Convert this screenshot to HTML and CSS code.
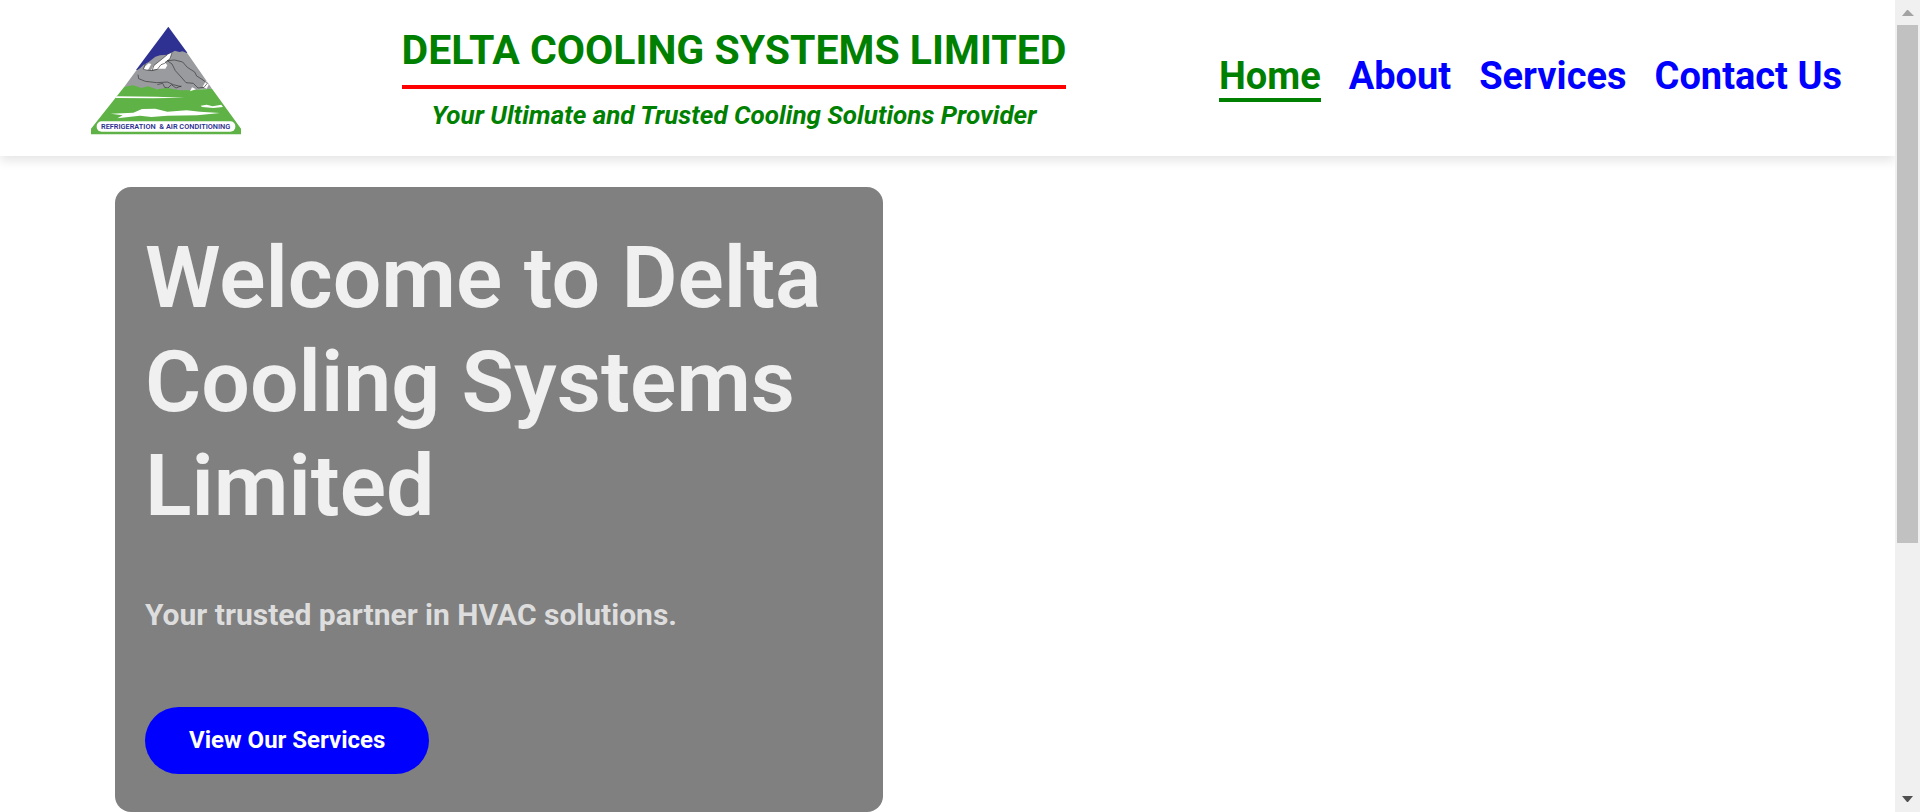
FILE: index.html
```html
<!DOCTYPE html>
<html lang="en">
<head>
<meta charset="utf-8">
<title>Delta Cooling Systems Limited</title>
<link rel="stylesheet" href="styles.css">
</head>
<body>
<div class="page">
  <header class="header">
    <svg class="logo" viewBox="33 22 450 323" role="img" aria-label="Delta Cooling Systems logo">
      <path fill="#2e3192" d="M265 22L322 100L260 130L190 160L168 152Z"/>
      <path fill="#999b9e" d="M133 202L168 154L180 147L190 137L206 128L226 112L240 108L262 106L285 94L298 98L308 96L322 102L396 208L300 216Z"/>
      <path fill="#fff" d="M276 100L270 118L254 128L262 138L256 148L240 148L222 150L212 154L220 140L242 122L262 106ZM206 132L214 134L204 152L190 152L194 142Z"/>
      <path fill="#fff" d="M368 202L378 184L386 196L380 208Z"/>
      <path fill="none" stroke="#333" stroke-width="2" d="M276 100L270 118L254 132L243 136L232 150L216 154L222 138L240 124L262 106M196 134L190 150L200 152L216 154M262 124L276 134L286 154L306 176L318 190L340 192L354 206L372 204L382 192L366 180L350 170L344 158L322 144L308 128L284 122L262 124M174 166L176 178L196 186L230 190L262 188L280 196L304 202M232 196L248 192L254 204L264 206L274 196L288 206L304 200"/>
      <path fill="#5eb246" d="M133 202L160 198L184 206L204 201L230 210L260 206L300 213L340 212L396 208L483 328V345H33V328Z"/>
      <path fill="#fff" d="M110 231L230 232L314 235L220 237L106 236ZM362 259L380 256L398 261L424 256L429 263L400 266L366 263ZM92 283L160 280L186 269L226 268L262 277L320 273L360 277L420 281L352 288L262 289L214 293L180 289L112 297L128 288Z"/>
      <path fill="#fff" d="M330 216L336 204L348 210Z"/>
      <rect fill="#fff" x="50" y="306" width="416" height="31" rx="15"/>
      <text class="logo-text" x="63" y="330" xml:space="preserve">REFRIGERATION  &amp; AIR CONDITIONING</text>
    </svg>
    <div class="brand">
      <h1 class="brand-name">DELTA COOLING SYSTEMS LIMITED</h1>
      <p class="tagline">Your Ultimate and Trusted Cooling Solutions Provider</p>
    </div>
    <nav class="nav">
      <a class="nav-link active" href="#home">Home</a>
      <a class="nav-link" href="#about">About</a>
      <a class="nav-link" href="#services">Services</a>
      <a class="nav-link" href="#contact">Contact Us</a>
    </nav>
  </header>
  <main class="hero">
    <section class="card">
      <h2 class="card-title">Welcome to Delta Cooling Systems Limited</h2>
      <p class="card-text">Your trusted partner in HVAC solutions.</p>
      <a class="button" href="#services">View Our Services</a>
    </section>
  </main>
</div>
<div class="scrollbar" aria-hidden="true">
  <svg class="arrow" viewBox="0 0 25 25"><path fill="#a3a3a3" d="M12 10h1l6 6H7z"/></svg>
  <div class="track"><div class="thumb"></div></div>
  <svg class="arrow" viewBox="0 0 25 25"><path fill="#505050" d="M7 9h11l-5 6h-1z"/></svg>
</div>
</body>
</html>
```
FILE: styles.css
```css
* {
  box-sizing: border-box;
}

body {
  margin: 0;
  display: flex;
  height: 100vh;
  overflow: hidden;
  background: #fff;
  font-family: Roboto, "Liberation Sans", sans-serif;
  font-weight: 700;
}

h1, h2, p {
  margin: 0;
}

.page {
  flex: 1;
  min-width: 0;
}

.header {
  display: flex;
  align-items: flex-start;
  justify-content: space-between;
  padding: 26px 53px 21px 91px;
  box-shadow: 0 5px 10px rgba(0, 0, 0, 0.1);
}

.logo {
  width: 150px;
  height: 109px;
}

.logo-text {
  font: 600 22px Roboto, "Liberation Sans", sans-serif;
  fill: #2e3192;
}

.brand {
  margin-left: 8px;
  color: green;
  text-align: center;
}

.brand-name {
  padding-bottom: 11px;
  border-bottom: 4px solid red;
  font-size: 41px;
  line-height: 48px;
  font-weight: 700;
}

.tagline {
  padding-top: 8px;
  font-size: 26px;
  line-height: 36px;
  font-style: italic;
}

.nav {
  display: flex;
  gap: 28px;
  padding-top: 28px;
}

.nav-link {
  border-bottom: 4px solid transparent;
  color: blue;
  font-size: 38px;
  line-height: 44px;
  text-decoration: none;
}

.nav-link.active {
  border-color: green;
  color: green;
}

.hero {
  padding: 31px 115px 0;
}

.card {
  width: 768px;
  padding: 39px 30px 38px;
  border-radius: 16px;
  background: #808080;
}

.card-title {
  color: #f0f0f0;
  font-size: 86px;
  line-height: 104px;
  font-weight: 600;
}

.card-text {
  padding: 55px 0 70px;
  color: #ddd;
  font-size: 30px;
  line-height: 44px;
}

.button {
  display: inline-block;
  padding: 0 44px;
  border-radius: 34px;
  background: blue;
  color: #fff;
  font-size: 24px;
  line-height: 67px;
  text-decoration: none;
}

.scrollbar {
  display: flex;
  flex-direction: column;
  width: 25px;
  background: #f0f0f0;
}

.arrow {
  width: 25px;
  height: 25px;
}

.track {
  flex: 1;
  padding: 0 2px;
}

.thumb {
  height: 68%;
  background: #c1c1c1;
}
```
